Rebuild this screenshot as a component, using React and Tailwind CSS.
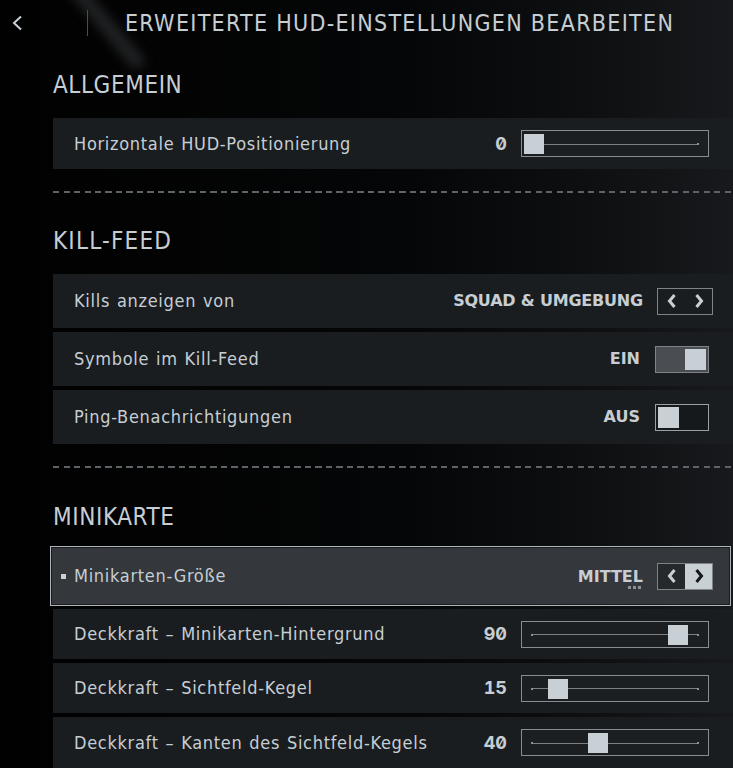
import React from "react";

const TXT = "text-[#c6ced4]";
const FONT = "[font-family:'DejaVu_Sans_Condensed','DejaVu_Sans',sans-serif] [font-stretch:condensed]";
const BOLD = "[font-family:'DejaVu_Sans','Noto_Sans',sans-serif] font-bold";
const MONO = "[font-family:'Inter',sans-serif] font-bold [font-feature-settings:'zero'_1,'tnum'_1]";
const LABEL = `${FONT} ${TXT} text-[18px] leading-[20px] tracking-[0.7px] [word-spacing:1px]`;

function Chevron({ dir = "left" }) {
  return (
    <svg width="12" height="16" viewBox="0 0 12 16">
      <path
        d={dir === "left" ? "M8.5 2 L3.5 8 L8.5 14" : "M3.5 2 L8.5 8 L3.5 14"}
        fill="none"
        stroke="currentColor"
        strokeWidth="3"
        strokeLinejoin="miter"
      />
    </svg>
  );
}

function Dashed() {
  return (
    <div className="h-[2px] w-full bg-[repeating-linear-gradient(90deg,#5e6367_0px,#5e6367_6px,transparent_6px,transparent_10.5px)]" />
  );
}

function Heading({ children, className = "" }) {
  return (
    <div className={`${FONT} ${TXT} text-[24px] leading-[24px] tracking-[0.6px] ${className}`}>{children}</div>
  );
}

function Row({ label, children, h = "h-[50px]" }) {
  return (
    <div className={`${h} bg-[#1a1d20] flex items-center pl-[21px] pr-[20px]`}>
      <span className={LABEL}>{label}</span>
      <div className="ml-auto flex items-center">{children}</div>
    </div>
  );
}

function Slider({ value }) {
  return (
    <div className="flex items-center mr-[4px]">
      <span className={`${MONO} ${TXT} text-[18px] leading-[20px] mr-[14px]`}>{value}</span>
      <div className="relative w-[188px] h-[27px] border border-[#878d92] bg-[#1c1f22]">
        <div className="absolute left-[10px] right-[10px] top-[12.5px] h-px bg-[#7b8186]" />
        <div className="absolute left-[9px] top-[12px] w-[2px] h-[2px] bg-[#8a9095]" />
        <div className="absolute right-[9px] top-[12px] w-[2px] h-[2px] bg-[#8a9095]" />
        <div
          className="absolute top-[3px] w-[20px] h-[20px] bg-[#c8d0d6]"
          style={{ left: 2 + 1.6 * value }}
        />
      </div>
    </div>
  );
}

function Toggle({ on, label }) {
  return (
    <div className="flex items-center mr-[4px]">
      <span className={`${BOLD} ${TXT} text-[16px] leading-[20px] mr-[15px]`}>{label}</span>
      <div
        className={`relative w-[54px] h-[27px] border ${on ? "border-[#7d8388] bg-[#4a4e52]" : "border-[#9aa1a6] bg-[#16191c]"}`}
      >
        <div className={`absolute top-[2px] w-[21px] h-[21px] bg-[#c8d0d6] ${on ? "right-[2px]" : "left-[2px]"}`} />
      </div>
    </div>
  );
}

function Arrows({ selected }) {
  return (
    <div className="flex w-[56px] h-[27px] border border-[#7d8388]">
      <div className={`flex-1 flex items-center justify-center ${selected ? "bg-[#26292c] text-[#c8d0d6]" : "text-[#c8d0d6]"}`}>
        <Chevron dir="left" />
      </div>
      <div className={`flex-1 flex items-center justify-center ${selected ? "bg-[#c8d0d6] text-[#15181b]" : "text-[#c8d0d6]"}`}>
        <Chevron dir="right" />
      </div>
    </div>
  );
}

export default function App() {
  return (
    <div className="relative w-[733px] h-[768px] overflow-hidden bg-[#020303]">
      {/* background ambience */}
      <div className="absolute inset-0 bg-[linear-gradient(90deg,#010101_0%,#050607_55%,#0d0f11_80%,#17191c_100%)]" />
      <div className="absolute left-[95px] top-[-40px] w-[14px] h-[120px] rotate-[-40deg] bg-[#3a3c3e] blur-[6px] opacity-60" />

      <div className="relative">
        {/* header */}
        <div className="h-[46px] flex items-center">
          <div className="w-[87px] pl-[11px] text-[#c8d0d6]">
            <svg width="12" height="16" viewBox="0 0 12 16">
              <path d="M10 1.5 L3 8 L10 14.5" fill="none" stroke="currentColor" strokeWidth="2" />
            </svg>
          </div>
          <div className="w-px h-[26px] bg-[#4a4d50]" />
          <div className={`${FONT} ${TXT} ml-[37px] text-[23px] leading-[23px] tracking-[1.3px]`}>
            ERWEITERTE HUD-EINSTELLUNGEN BEARBEITEN
          </div>
        </div>

        <div className="pl-[53px]">
          <Heading className="mt-[27px]">ALLGEMEIN</Heading>
          <div className="mt-[21px]">
            <Row label="Horizontale HUD-Positionierung" h="h-[51px]">
              <Slider value={0} />
            </Row>
          </div>

          <div className="mt-[22px]">
            <Dashed />
          </div>

          <Heading className="mt-[36px] tracking-[1.2px]">KILL-FEED</Heading>
          <div className="mt-[21px] flex flex-col gap-[4px]">
            <Row label="Kills anzeigen von" h="h-[54px]">
              <span className={`${BOLD} ${TXT} text-[16px] leading-[20px] tracking-[-0.2px] mr-[14px]`}>SQUAD &amp; UMGEBUNG</span>
              <Arrows />
            </Row>
            <Row label="Symbole im Kill-Feed" h="h-[54px]">
              <Toggle on label="EIN" />
            </Row>
            <Row label="Ping-Benachrichtigungen" h="h-[54px]">
              <Toggle label="AUS" />
            </Row>
          </div>

          <div className="mt-[22px]">
            <Dashed />
          </div>

          <Heading className="mt-[37px]">MINIKARTE</Heading>

          <div className="mt-[17px] ml-[-3px] mr-[2px] h-[60px] border border-[#aeb5ba] shadow-[inset_0_0_0_1px_#1a1c1e] bg-[#34373b] flex items-center pl-[10px] pr-[17px]">
            <div className="w-[5px] h-[5px] bg-[#c8d0d6] mr-[8px]" />
            <span className={LABEL}>Minikarten-Größe</span>
            <div className="ml-auto flex items-center">
              <div className="relative mr-[14px]">
                <span className={`${BOLD} ${TXT} text-[16px] leading-[20px]`}>MITTEL</span>
                <div className="absolute right-[2px] top-[22px] flex gap-[2px]">
                  <div className="w-[3px] h-[3px] bg-[#8a9095]" />
                  <div className="w-[3px] h-[3px] bg-[#8a9095]" />
                  <div className="w-[3px] h-[3px] bg-[#8a9095]" />
                </div>
              </div>
              <Arrows selected />
            </div>
          </div>

          <div className="mt-[3px] flex flex-col gap-[4px]">
            <Row label="Deckkraft – Minikarten-Hintergrund" h="h-[50px]">
              <Slider value={90} />
            </Row>
            <Row label="Deckkraft – Sichtfeld-Kegel" h="h-[50px]">
              <Slider value={15} />
            </Row>
            <Row label="Deckkraft – Kanten des Sichtfeld-Kegels" h="h-[51px]">
              <Slider value={40} />
            </Row>
          </div>
        </div>
      </div>
    </div>
  );
}
